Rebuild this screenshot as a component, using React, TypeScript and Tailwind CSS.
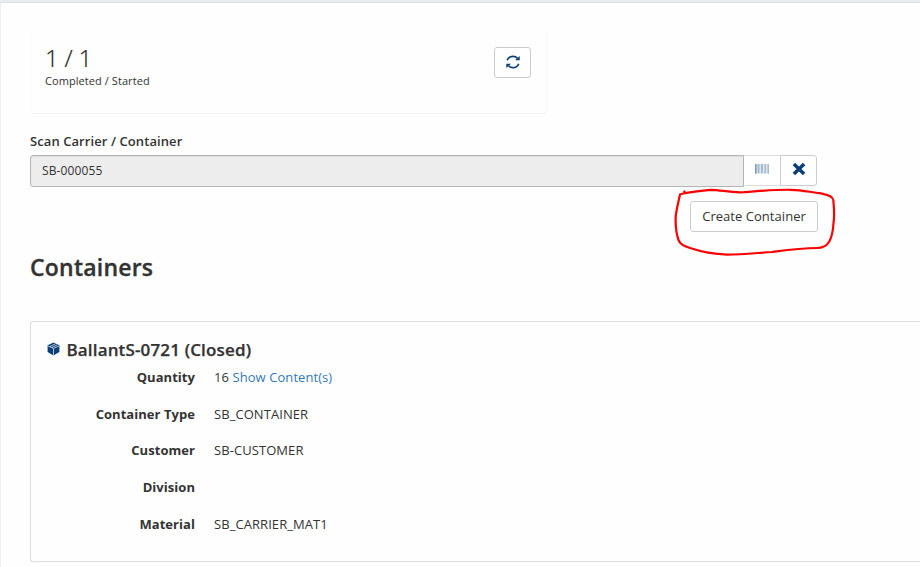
import React from "react";

function RefreshIcon() {
  return (
    <svg width="14" height="14" viewBox="0 0 14 14" fill="none" className="text-[#0b3f78]">
      <path d="M1.1 5.2C2 3 4.2 1.4 7 1.4c1.9 0 3.3.6 4.4 1.7M12.7 8.7c-.8 2.2-3 3.9-5.7 3.9-1.9 0-3.4-.7-4.4-1.8" stroke="currentColor" strokeWidth="1.7" />
      <path d="M13.7 1v4.3H9zM.3 13V8.7H5z" fill="currentColor" />
    </svg>
  );
}

function BarcodeIcon() {
  return (
    <svg width="14" height="10" viewBox="0 0 14 10" shapeRendering="crispEdges">
      <path d="M0 0h14v10H0z" fill="#dfe7ee" />
      <path d="M0 0h1v10H0z" fill="#7f9dbc" />
      <path d="M1 0h1v9H1zM3 0h1v9H3zM6 0h1v9H6zM7 0h1v9H7zM10 0h1v9h-1zM13 0h1v10h-1z" fill="#a9bdd1" />
      <path d="M2 0h1v9H2zM4 0h1v9H4zM9 0h1v9H9zM12 0h1v9h-1z" fill="#c3d0de" />
    </svg>
  );
}

function CloseIcon() {
  return (
    <svg width="14" height="14" viewBox="0 0 14 14">
      <path d="M1.9 1.9l10.2 10.2M12.1 1.9L1.9 12.1" stroke="#0b3f78" strokeWidth="3.5" />
    </svg>
  );
}

function BoxIcon() {
  return (
    <svg width="13" height="14" viewBox="0 0 13 14">
      <path d="M6.5.6l5.9 2.6v6.9l-5.9 3.3-5.9-3.3V3.2z" fill="#0b3f78" />
      <path d="M.8 3.9l5.7 2.5 5.7-2.5M6.5 6.4v6.6M2.8 4.6l5.6-2.8M4.8 5.5l5.4-2.7" fill="none" stroke="#d5e0ea" strokeWidth=".8" />
    </svg>
  );
}

const rows = [
  { label: "Quantity", value: "16", link: "Show Content(s)" },
  { label: "Container Type", value: "SB_CONTAINER" },
  { label: "Customer", value: "SB-CUSTOMER" },
  { label: "Division", value: "" },
  { label: "Material", value: "SB_CARRIER_MAT1" },
];

export default function App() {
  return (
    <div className="relative h-[567px] w-[920px] overflow-hidden bg-[#fefefe] font-['Open_Sans','Noto_Sans',sans-serif] text-[13px] text-[#333]">
      <div className="h-[3px] border-b border-[#dcdfe9] bg-[#e9edf2]" />
      <main className="h-[564px] border-l border-[#f0f0f2] pl-[29px] pt-[30px]">
        <section className="flex h-[81px] w-[517px] justify-between rounded-b border-x border-b border-b-[#f3f3f3] border-x-[#fafafa] bg-[#fefefe] pl-[14px] pr-[15px] pt-[7px]">
          <div className="pt-[5px]">
            <div className="text-[24px] font-light leading-[26px] tracking-[-0.2px] text-[#222] [-webkit-text-stroke:0.2px_#222]">1 / 1</div>
            <div className="mt-[2px] text-[11px] leading-[16px] tracking-[0.07px]">Completed / Started</div>
          </div>
          <button aria-label="Refresh" className="mt-[7px] flex h-[31px] w-[37px] items-center justify-center rounded-[3px] border border-[#ccc] bg-white pb-[1px] pl-[1px]">
            <RefreshIcon />
          </button>
        </section>

        <label className="mt-[18px] block h-[23px] text-[13px] font-semibold leading-[19px] tracking-[0.08px]">Scan Carrier / Container</label>
        <div className="flex h-[32px]">
          <div className="flex h-[32px] w-[714px] items-center rounded-l-[3px] border border-[#b5b5b5] bg-[#ededed] pl-[11px] pb-px text-[12px] tracking-[0.12px] shadow-[inset_0_1px_1px_rgba(0,0,0,0.075)]">SB-000055</div>
          <button aria-label="Scan barcode" className="flex h-[31px] w-[36px] items-center justify-center border-y border-[#ddd] bg-white pb-[3px]">
            <BarcodeIcon />
          </button>
          <button aria-label="Clear" className="flex h-[31px] w-[37px] items-center justify-center rounded-r-[3px] border border-[#ccc] bg-white pb-[3px]">
            <CloseIcon />
          </button>
        </div>
        <div className="mt-[14px] flex w-[788px] justify-end">
          <button className="h-[31px] w-[128px] rounded-[3px] border border-[#ccc] bg-white text-[13px] leading-[29px] tracking-[0.04px]">Create Container</button>
        </div>

        <h1 className="mt-[19px] text-[23px] font-semibold leading-[32px] tracking-[0.22px] [-webkit-text-stroke:0.35px_#333]">Containers</h1>

        <section className="mt-[38px] h-[241px] rounded-l-[3px] border border-r-0 border-[#ddd] pt-[17px]">
          <h2 className="flex h-[22px] items-center pl-[16px] text-[17px] font-semibold leading-[22px] tracking-[0.15px] [-webkit-text-stroke:0.25px_#333]">
            <span className="mr-[6.5px] pb-[2px]"><BoxIcon /></span>
            BallantS-0721 (Closed)
          </h2>
          <dl>
            {rows.map((row) => (
              <div key={row.label} className="flex h-[36.65px] pt-[7px] leading-[19px]">
                <dt className="w-[164px] text-right font-bold tracking-[0.05px]">{row.label}</dt>
                <dd className="pl-[19px] tracking-[0.07px]">
                  {row.value}
                  {row.link && <a className="text-[#337ab7]"> {row.link}</a>}
                </dd>
              </div>
            ))}
          </dl>
        </section>
      </main>

      <svg className="pointer-events-none absolute left-[670px] top-[184px]" width="170" height="76" viewBox="670 184 170 76">
        <path d="M680 194.5C686 192 701 191 711 189.8C721 189.8 730 193 744 192.2C759 191 775 189.5 791 189.8C804 190 811 192.5 821 193.3C830 195 833 197 833.3 200C834 207 834.5 217 833.5 223C833 232 832 237 829 242C826 247 822 248 817 248C801 248 787 250 772 252C756 253 743 254.5 727 254.6C711 254 699 251 690 248C683 245.5 680 244 678.5 240C676 233 675.5 227 675.6 218C676 210 679 200 680 194.5M684.3 191.5L685 193" fill="none" stroke="#fb0000" strokeWidth="2.2" strokeLinecap="round" strokeLinejoin="round" />
      </svg>
    </div>
  );
}
